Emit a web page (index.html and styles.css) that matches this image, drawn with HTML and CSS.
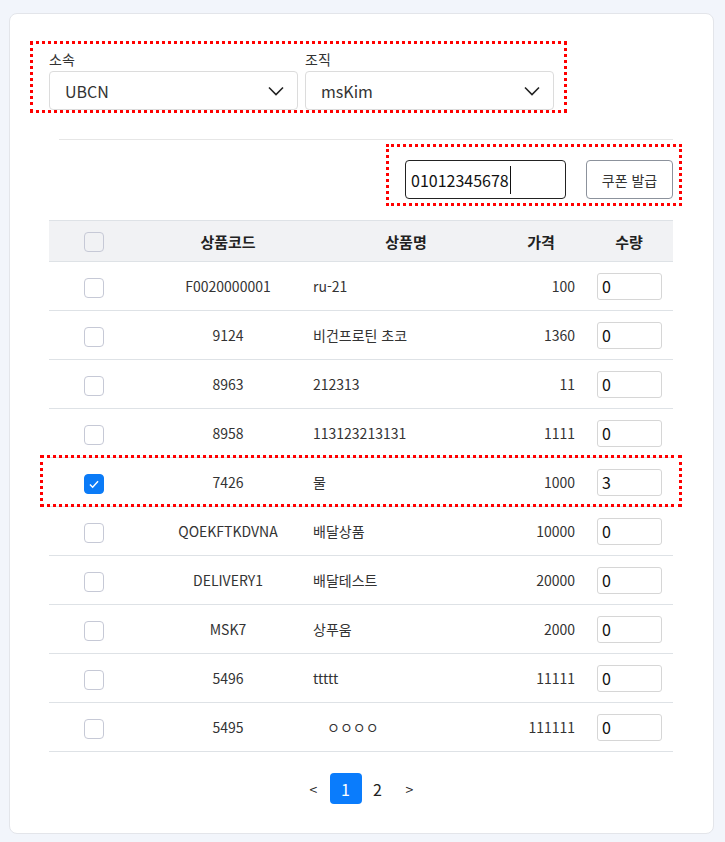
FILE: index.html
```html
<!DOCTYPE html>
<html lang="ko">
<head>
    <meta charset="UTF-8">
    <meta name="viewport" content="width=device-width, initial-scale=1.0">
    <title>쿠폰 발급</title>
    <link rel="stylesheet" href="styles.css">
</head>
<body>
    <div class="card">
        <div class="filter-box">
            <div class="field">
                <label>소속</label>
                <div class="select">
                    <span>UBCN</span>
                    <svg viewBox="0 0 16 10"><path d="M1 1.5l7 7 7-7"/></svg>
                </div>
            </div>
            <div class="field">
                <label>조직</label>
                <div class="select">
                    <span>msKim</span>
                    <svg viewBox="0 0 16 10"><path d="M1 1.5l7 7 7-7"/></svg>
                </div>
            </div>
        </div>

        <div class="divider"></div>

        <div class="issue-row">
            <div class="issue-box">
                <div class="phone-input"><span class="caret">01012345678</span></div>
                <button class="issue-btn">쿠폰 발급</button>
            </div>
        </div>

        <div class="table-wrap">
            <table class="products">
                <thead>
                    <tr>
                        <th class="col-check"><span class="checkbox"></span></th>
                        <th class="col-code">상품코드</th>
                        <th class="col-name">상품명</th>
                        <th class="col-price">가격</th>
                        <th class="col-qty">수량</th>
                    </tr>
                </thead>
                <tbody>
                    <tr>
                        <td class="col-check"><span class="checkbox"></span></td>
                        <td class="col-code">F0020000001</td>
                        <td class="col-name">ru-21</td>
                        <td class="col-price">100</td>
                        <td class="col-qty"><div class="qty">0</div></td>
                    </tr>
                    <tr>
                        <td class="col-check"><span class="checkbox"></span></td>
                        <td class="col-code">9124</td>
                        <td class="col-name">비건프로틴 초코</td>
                        <td class="col-price">1360</td>
                        <td class="col-qty"><div class="qty">0</div></td>
                    </tr>
                    <tr>
                        <td class="col-check"><span class="checkbox"></span></td>
                        <td class="col-code">8963</td>
                        <td class="col-name">212313</td>
                        <td class="col-price">11</td>
                        <td class="col-qty"><div class="qty">0</div></td>
                    </tr>
                    <tr>
                        <td class="col-check"><span class="checkbox"></span></td>
                        <td class="col-code">8958</td>
                        <td class="col-name">113123213131</td>
                        <td class="col-price">1111</td>
                        <td class="col-qty"><div class="qty">0</div></td>
                    </tr>
                    <tr>
                        <td class="col-check"><span class="checkbox checked"><svg viewBox="0 0 20 20"><path d="M5.5 10.5l3 3 6-6.5"/></svg></span></td>
                        <td class="col-code">7426</td>
                        <td class="col-name">물</td>
                        <td class="col-price">1000</td>
                        <td class="col-qty"><div class="qty">3</div></td>
                    </tr>
                    <tr>
                        <td class="col-check"><span class="checkbox"></span></td>
                        <td class="col-code">QOEKFTKDVNA</td>
                        <td class="col-name">배달상품</td>
                        <td class="col-price">10000</td>
                        <td class="col-qty"><div class="qty">0</div></td>
                    </tr>
                    <tr>
                        <td class="col-check"><span class="checkbox"></span></td>
                        <td class="col-code">DELIVERY1</td>
                        <td class="col-name">배달테스트</td>
                        <td class="col-price">20000</td>
                        <td class="col-qty"><div class="qty">0</div></td>
                    </tr>
                    <tr>
                        <td class="col-check"><span class="checkbox"></span></td>
                        <td class="col-code">MSK7</td>
                        <td class="col-name">상푸움</td>
                        <td class="col-price">2000</td>
                        <td class="col-qty"><div class="qty">0</div></td>
                    </tr>
                    <tr>
                        <td class="col-check"><span class="checkbox"></span></td>
                        <td class="col-code">5496</td>
                        <td class="col-name">ttttt</td>
                        <td class="col-price">11111</td>
                        <td class="col-qty"><div class="qty">0</div></td>
                    </tr>
                    <tr>
                        <td class="col-check"><span class="checkbox"></span></td>
                        <td class="col-code">5495</td>
                        <td class="col-name">　ㅇㅇㅇㅇ</td>
                        <td class="col-price">111111</td>
                        <td class="col-qty"><div class="qty">0</div></td>
                    </tr>
                </tbody>
            </table>
            <div class="row-mark"></div>
        </div>

        <div class="pagination">
            <span class="page">&lt;</span>
            <span class="page active">1</span>
            <span class="page">2</span>
            <span class="page">&gt;</span>
        </div>
    </div>
</body>
</html>
```

FILE: styles.css
```css
* {
    box-sizing: border-box;
    margin: 0;
    padding: 0;
}
body {
    background-color: #f2f5fb;
    font-family: "Noto Sans CJK KR", "Noto Sans", sans-serif;
    color: #333;
    height: 842px;
    overflow: hidden;
}
.card {
    margin: 13px 11px 0 9px;
    height: 821px;
    background-color: #fff;
    border: 1px solid #e3e5ea;
    border-radius: 8px;
    padding: 27px 20px 30px 20px;
}

/* dotted annotation boxes */
.filter-box,
.issue-box,
.row-mark {
    border: 3px dotted #f00;
}

.filter-box {
    width: 537px;
    height: 72px;
    padding: 5px 13px 0 16px;
    display: grid;
    grid-template-columns: 249px 249px;
    column-gap: 7px;
}
.field label {
    display: block;
    font-size: 14px;
    line-height: 20px;
    height: 22px;
    color: #333;
}
.select {
    height: 39px;
    border: 1px solid #dcdcdc;
    border-radius: 4px;
    display: flex;
    align-items: center;
    justify-content: space-between;
    padding: 0 13px 0 15px;
    font-size: 16px;
    color: #333;
}
.select svg {
    width: 16px;
    height: 10px;
    fill: none;
    stroke: #222;
    stroke-width: 1.6;
}

.divider {
    height: 1px;
    background-color: #e6e6e6;
    margin: 26px 20px 0 29px;
}

.issue-row {
    display: flex;
    justify-content: flex-end;
    margin: 4px 11px 0 0;
}
.issue-box {
    width: 296px;
    height: 62px;
    padding: 13px 6px 4px 16px;
    display: flex;
    gap: 20px;
}
.phone-input {
    width: 161px;
    height: 39px;
    border: 1px solid #222;
    border-radius: 4px;
    padding: 0 5px;
    display: flex;
    align-items: center;
    font-size: 16px;
    color: #111;
}
.caret {
    border-right: 1px solid #111;
    padding-right: 1px;
    line-height: 28px;
}
.issue-btn {
    width: 87px;
    height: 39px;
    border: 1px solid #8c929c;
    border-radius: 4px;
    background-color: #fff;
    font-family: inherit;
    font-size: 14px;
    color: #333;
}

.table-wrap {
    position: relative;
    margin: 14px 20px 0 19px;
}
.products {
    width: 624px;
    border-collapse: collapse;
    table-layout: fixed;
    font-size: 14px;
}
.products thead tr {
    background-color: #f1f2f4;
    border-top: 1px solid #dee2e6;
}
.products th {
    height: 41px;
    font-size: 15px;
    font-weight: bold;
    color: #222;
}
.products tr {
    border-bottom: 1px solid #dee2e6;
}
.products td {
    height: 49px;
    color: #333;
}
.col-check {
    width: 90px;
    text-align: center;
}
.col-code {
    width: 166px;
    padding-left: 12px;
    text-align: center;
}
.col-name {
    width: 202px;
    padding-left: 8px;
}
th.col-name {
    padding-left: 0;
    text-align: center;
}
.col-price {
    width: 78px;
    padding-right: 10px;
    text-align: right;
}
th.col-price {
    text-align: center;
}
.col-qty {
    width: 88px;
    padding-left: 12px;
}
th.col-qty {
    padding-left: 0;
    text-align: center;
}

.checkbox {
    display: inline-block;
    width: 20px;
    height: 20px;
    border: 1px solid #c6c9d6;
    border-radius: 4px;
    vertical-align: middle;
    margin-top: 3px;
}
thead .checkbox {
    margin-top: 0;
}
.checkbox.checked {
    background-color: #0b7bf7;
    border-color: #0b7bf7;
}
.checkbox svg {
    display: block;
    width: 18px;
    height: 18px;
    fill: none;
    stroke: #fff;
    stroke-width: 1.6;
}
.qty {
    width: 65px;
    height: 27px;
    border: 1px solid #d6d6d6;
    border-radius: 3px;
    padding-left: 4px;
    font-size: 16px;
    line-height: 25px;
    color: #111;
}

.row-mark {
    position: absolute;
    left: -9px;
    top: 235px;
    width: 642px;
    height: 52px;
    pointer-events: none;
}

.pagination {
    display: flex;
    justify-content: center;
    margin-top: 21px;
}
.page {
    width: 32px;
    height: 31px;
    display: flex;
    align-items: center;
    justify-content: center;
    font-size: 16px;
    color: #222;
    border-radius: 4px;
}
.page:first-child,
.page:last-child {
    font-size: 14px;
}
.page.active {
    background-color: #0a7cfc;
    color: #fff;
}
```
